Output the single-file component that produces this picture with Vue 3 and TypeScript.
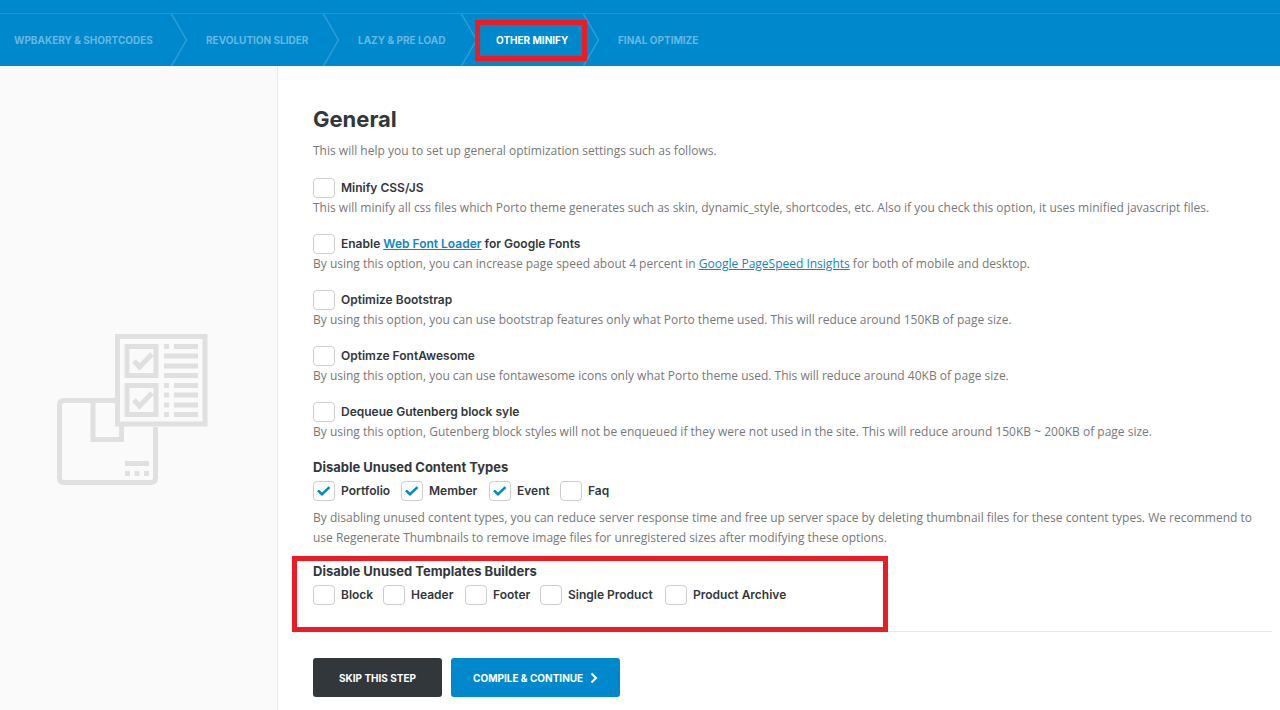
<script setup lang="ts">
import { ref } from 'vue'

interface Step { label: string; active?: boolean }
interface Choice { id: string; label: string; checked: boolean }

const steps: Step[] = [
  { label: 'WPBAKERY & SHORTCODES' },
  { label: 'REVOLUTION SLIDER' },
  { label: 'LAZY & PRE LOAD' },
  { label: 'OTHER MINIFY', active: true },
  { label: 'FINAL OPTIMIZE' },
]

const minify = ref(false)
const fontLoader = ref(false)
const options = ref([
  { id: 'bootstrap', label: 'Optimize Bootstrap', checked: false, text: 'By using this option, you can use bootstrap features only what Porto theme used. This will reduce around 150KB of page size.' },
  { id: 'fontawesome', label: 'Optimze FontAwesome', checked: false, text: 'By using this option, you can use fontawesome icons only what Porto theme used. This will reduce around 40KB of page size.' },
  { id: 'gutenberg', label: 'Dequeue Gutenberg block syle', checked: false, text: 'By using this option, Gutenberg block styles will not be enqueued if they were not used in the site. This will reduce around 150KB ~ 200KB of page size.' },
])
const contentTypes = ref<Choice[]>([
  { id: 'portfolio', label: 'Portfolio', checked: true },
  { id: 'member', label: 'Member', checked: true },
  { id: 'event', label: 'Event', checked: true },
  { id: 'faq', label: 'Faq', checked: false },
])
const builders = ref<Choice[]>([
  { id: 'block', label: 'Block', checked: false },
  { id: 'header', label: 'Header', checked: false },
  { id: 'footer', label: 'Footer', checked: false },
  { id: 'single', label: 'Single Product', checked: false },
  { id: 'archive', label: 'Product Archive', checked: false },
])
</script>

<template>
  <div class="page">
    <header class="top">
      <nav class="steps" aria-label="Steps">
        <div v-for="(s, i) in steps" :key="s.label" class="step">
          <a href="#" class="step-link" :class="{ active: s.active }">{{ s.label }}</a>
          <svg v-if="i < steps.length - 1" class="chevron" viewBox="0 0 17 52" aria-hidden="true">
            <path d="M0.5 0 L15.5 26 L0.5 52" fill="none" stroke="#2d9dd6" stroke-width="1.500" />
          </svg>
          <span v-if="s.active" class="mark mark-step"></span>
        </div>
      </nav>
    </header>

    <div class="body">
      <aside class="side">
        <svg class="art" viewBox="0 0 152 152" fill="none" stroke="#e0e0e0" stroke-width="5" aria-hidden="true">
          <path d="M59 66.500H8Q3.500 66.500 3.500 71V144Q3.500 148.500 8 148.500H95Q99.500 148.500 99.500 144V93" />
          <path d="M37 67V105.500H65.500V92" />
          <rect x="61.500" y="2.500" width="87.500" height="87.500" />
          <rect x="71" y="12.500" width="29" height="29" />
          <rect x="71" y="51.500" width="29" height="29" />
          <path d="M78 27L83.500 33L96 20M78 66L83.500 72L96 59" />
          <path d="M108 12.500h5M118 12.500h24M108 22h34M108 32h34M108 41.500h34M108 51.500h5M118 51.500h24M108 61h5M118 61h24M108 71h5M118 71h24M108 80.500h5M118 80.500h24" />
          <path d="M69 129.500h24M69 139.500h5M78.500 139.500h5M88 139.500h5" />
        </svg>
      </aside>

      <main class="content">
        <h1>General</h1>
        <p class="intro">This will help you to set up general optimization settings such as follows.</p>

        <div class="option">
          <div class="choice">
            <span class="box">
              <input id="minify" v-model="minify" type="checkbox" />
              <svg viewBox="0 0 14 10" aria-hidden="true"><path d="M1 4.500L5 8.200L12.500 1.200" /></svg>
            </span>
            <label for="minify">Minify CSS/JS</label>
          </div>
          <p>This will minify all css files which Porto theme generates such as skin, dynamic_style, shortcodes, etc. Also if you check this option, it uses minified javascript files.</p>
        </div>

        <div class="option">
          <div class="choice">
            <span class="box">
              <input id="loader" v-model="fontLoader" type="checkbox" />
              <svg viewBox="0 0 14 10" aria-hidden="true"><path d="M1 4.500L5 8.200L12.500 1.200" /></svg>
            </span>
            <label for="loader">Enable <a href="#">Web Font Loader</a> for Google Fonts</label>
          </div>
          <p>By using this option, you can increase page speed about 4 percent in <a href="#">Google PageSpeed Insights</a> for both of mobile and desktop.</p>
        </div>

        <div v-for="o in options" :key="o.id" class="option">
          <div class="choice">
            <span class="box">
              <input :id="o.id" v-model="o.checked" type="checkbox" />
              <svg viewBox="0 0 14 10" aria-hidden="true"><path d="M1 4.500L5 8.200L12.500 1.200" /></svg>
            </span>
            <label :for="o.id">{{ o.label }}</label>
          </div>
          <p>{{ o.text }}</p>
        </div>

        <section class="group">
          <h2>Disable Unused Content Types</h2>
          <div class="choices types">
            <div v-for="c in contentTypes" :key="c.id" class="choice">
              <span class="box">
                <input :id="c.id" v-model="c.checked" type="checkbox" />
                <svg viewBox="0 0 14 10" aria-hidden="true"><path d="M1 4.500L5 8.200L12.500 1.200" /></svg>
              </span>
              <label :for="c.id">{{ c.label }}</label>
            </div>
          </div>
          <p class="note">By disabling unused content types, you can reduce server response time and free up server space by deleting thumbnail files for these content types. We recommend to use Regenerate Thumbnails to remove image files for unregistered sizes after modifying these options.</p>
        </section>

        <section class="group builders-group">
          <h2>Disable Unused Templates Builders</h2>
          <div class="choices builders">
            <div v-for="c in builders" :key="c.id" class="choice">
              <span class="box">
                <input :id="c.id" v-model="c.checked" type="checkbox" />
                <svg viewBox="0 0 14 10" aria-hidden="true"><path d="M1 4.500L5 8.200L12.500 1.200" /></svg>
              </span>
              <label :for="c.id">{{ c.label }}</label>
            </div>
          </div>
          <span class="mark mark-group"></span>
        </section>

        <div class="actions">
          <button type="button" class="btn dark">SKIP THIS STEP</button>
          <button type="button" class="btn">
            COMPILE &amp; CONTINUE
            <svg class="arrow" viewBox="0 0 8 12" aria-hidden="true"><path d="M1.500 1.500L6 6L1.500 10.500" fill="none" stroke="#fff" stroke-width="2" /></svg>
          </button>
        </div>
      </main>
    </div>
  </div>
</template>

<style>
body { margin: 0; background: #fff; }
</style>

<style scoped>
.page {
  min-height: 100vh;
  display: flex;
  flex-direction: column;
  font-family: Inter, "Open Sans", sans-serif;
  font-size: 12px;
  line-height: 20px;
  color: #777;
}
.top { background: #0088cc; padding-top: 13px; }
.steps {
  display: grid;
  grid-template-columns: 171px 152px 138px 122px auto;
  height: 52px;
  border-top: 1px solid #1f96d3;
}
.step { position: relative; display: flex; align-items: center; padding-left: 35px; }
.step:first-child { padding-left: 14px; }
.step-link {
  color: #66b8e0;
  font-size: 10px;
  font-weight: 700;
  text-decoration: none;
  white-space: nowrap;
}
.step-link.active { color: #fff; }
.chevron { position: absolute; left: 100%; top: 0; width: 17px; height: 52px; }
.mark { position: absolute; border: 5px solid #ed1c24; pointer-events: none; }
.mark-step { left: 14px; right: -4px; top: 6px; bottom: 5px; z-index: 1; }

.body { flex: 1; display: flex; }
.side {
  flex: 0 0 277px;
  display: flex;
  justify-content: center;
  align-items: flex-start;
  background: #fafafa;
  border-right: 1px solid #e7e7e7;
}
.art { width: 152px; height: 152px; margin-top: 268px; margin-right: 14px; }
.content { flex: 1; min-width: 0; padding: 37px 8px 12px 35px; }

h1 { margin: 0; font-size: 22px; line-height: 32px; font-weight: 700; color: #32373c; }
p { margin: 0; font-family: "Open Sans", sans-serif; }
.intro { margin: 6px 0 17px; }
a { color: #0f83cc; }
.option { margin-bottom: 16px; }
.choice { display: flex; align-items: center; gap: 6px; height: 20px; }
.choice label { font-size: 12px; font-weight: 600; color: #32373c; white-space: nowrap; }
.box { position: relative; display: flex; width: 22px; height: 20px; }
.box input {
  appearance: none;
  box-sizing: border-box;
  width: 22px;
  height: 20px;
  margin: 0;
  border: 1px solid #ccc;
  border-radius: 4px;
  background: #fff;
}
.box svg {
  position: absolute;
  left: 4px;
  top: 5px;
  width: 14px;
  height: 10px;
  fill: none;
  stroke: #0088cc;
  stroke-width: 2.5;
  visibility: hidden;
  pointer-events: none;
}
.box input:checked + svg { visibility: visible; }

.group { position: relative; }
h2 { margin: 0; font-size: 13px; line-height: 18px; font-weight: 700; color: #32373c; }
.choices { display: grid; margin-top: 5px; }
.types { grid-template-columns: 88px 88px 71px auto; }
.builders { grid-template-columns: 70px 82px 75px 125px auto; }
.note { margin: 7px 0 14px; padding-right: 8px; }
.builders-group { padding-bottom: 26px; border-bottom: 1px solid #e7e7e7; }
.mark-group { left: -21px; top: -6px; bottom: -1px; width: 586px; }

.actions { display: flex; gap: 9px; margin-top: 26px; }
.btn {
  display: flex;
  align-items: center;
  gap: 7px;
  height: 39px;
  padding: 0 22px;
  border: 0;
  border-radius: 3px;
  background: #0088cc;
  color: #fff;
  font-family: inherit;
  font-size: 10px;
  font-weight: 700;
}
.btn.dark { padding: 0 26px; background: #32373c; }
.arrow { width: 8px; height: 12px; }
</style>
